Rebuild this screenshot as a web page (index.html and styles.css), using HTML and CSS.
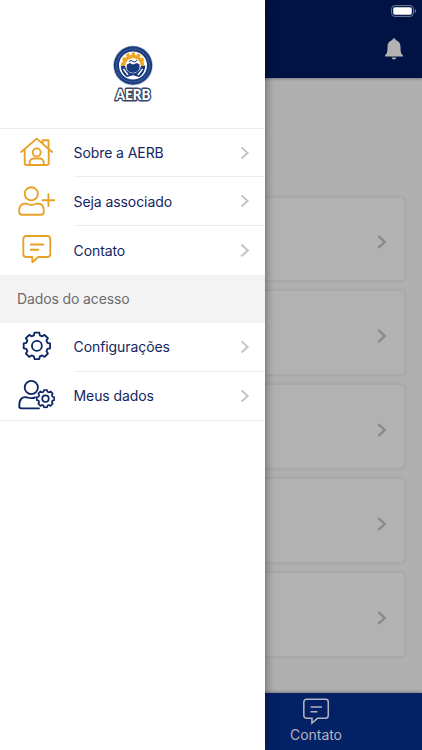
FILE: index.html
```html
<!DOCTYPE html>
<html lang="pt-BR">
<head>
<meta charset="utf-8">
<meta name="viewport" content="width=device-width, initial-scale=1">
<title>AERB</title>
<link rel="stylesheet" href="styles.css">
</head>
<body>
<svg class="defs" width="0" height="0" aria-hidden="true">
  <symbol id="chevron" viewBox="0 0 10 14"><path d="M1.300 1.100 7.800 7 1.300 12.900"/></symbol>
  <symbol id="chat" viewBox="0 0 32 32"><path d="M5 2.500H26a3 3 0 0 1 3 3V20.500a3 3 0 0 1-3 3H17L11 28.700V23.500H5a3 3 0 0 1-3-3V5.500a3 3 0 0 1 3-3ZM9.500 11H22M9.500 16.200H17"/></symbol>
  <symbol id="gear" viewBox="-15 -15 30 30"><path d="M-3-10.600-2.400-13.300H2.400L3-10.600 5.370-9.620 7.710-11.100 11.100-7.710 9.620-5.370 10.600-3 13.300-2.400V2.400L10.600 3 9.620 5.370 11.100 7.710 7.710 11.100 5.370 9.620 3 10.600 2.400 13.300H-2.400L-3 10.600-5.370 9.620-7.710 11.100-11.100 7.710-9.620 5.370-10.600 3-13.300 2.400V-2.400L-10.600-3-9.620-5.370-11.100-7.710-7.710-11.100-5.370-9.620Z"/><circle r="5"/></symbol>
</svg>
<div class="phone">
  <main class="app">
    <header class="topbar">
      <svg class="battery" viewBox="0 0 26 12"><rect x=".6" y=".6" width="21.800" height="10.800" rx="3.200" fill="none" stroke="#747f9f"/><rect x="2.200" y="2.200" width="18.600" height="7.600" rx="1.700" fill="#fff"/><path d="M23.800 4v4q1.400-.5 1.400-2T23.800 4Z" fill="#747f9f"/></svg>
      <svg class="bell" viewBox="0 0 20 22"><path d="M10 .3c1 0 1.500.7 1.500 1.700 3.300.8 5 3.300 5 6.800 0 5.200.5 7 2.500 8.700v.9H1v-.9c2-1.700 2.500-3.500 2.500-8.700 0-3.500 1.700-6 5-6.800C8.500 1 9 .3 10 .3ZM7.700 19.500h4.600c-.2 1.300-1.100 2-2.300 2s-2.100-.7-2.300-2Z" fill="#b2b2b2"/></svg>
    </header>
    <section class="cards">
      <article class="card"><svg><use href="#chevron"/></svg></article>
      <article class="card"><svg><use href="#chevron"/></svg></article>
      <article class="card"><svg><use href="#chevron"/></svg></article>
      <article class="card"><svg><use href="#chevron"/></svg></article>
      <article class="card"><svg><use href="#chevron"/></svg></article>
    </section>
    <footer class="tabbar">
      <div class="tab"><svg viewBox="0 0 32 32"><use href="#chat" width="32" height="32"/></svg><span>Contato</span></div>
    </footer>
  </main>
  <aside class="drawer">
    <div class="brand">
      <svg class="logo" viewBox="0 0 44 58">
        <circle cx="22" cy="20.500" r="20" fill="#c9d0e2"/>
        <circle cx="22" cy="20.500" r="19.200" fill="#193b80"/>
        <circle cx="22" cy="20.500" r="16.500" fill="none" stroke="#6579a6" stroke-width="1.200" stroke-dasharray="1 1.100"/>
        <circle cx="22" cy="20.500" r="14" fill="#fff"/>
        <path d="M9.700 20.500 14 21q1 6 8 7.500 7-1.500 8-7.500l4.300-.5q-.5 8-6 11.500H15.700q-5.500-3.500-6-11.500Z" fill="#193b80"/>
        <circle cx="22" cy="19.500" r="10.800" fill="none" stroke="#eda625" stroke-width="2.600" stroke-dasharray="3.390 2.265 3.390 2.265 3.390 2.265 3.390 2.265 3.390 2.265 3.390 100" transform="rotate(172 22 19.500)"/>
        <path d="M12.500 21a9.500 9.500 0 0 1 19 0" fill="none" stroke="#eda625" stroke-width="3.400"/>
        <circle cx="22" cy="20" r="6.600" fill="#fff"/>
        <path d="M16 19.500 19 18l3 1.500 4-1.500 2.500 1.500v4l-2 3-4.500 1.500-4.500-1.500-2-3Z" fill="#193b80"/>
        <path d="M18 16.500q2-2 4 0t4-1.500" fill="none" stroke="#193b80"/>
        <path d="m12.500 24 4.500 6M31.500 24 27 30" fill="none" stroke="#fff" stroke-width="1.300"/>
        <path d="m17 32.500 5-1.500 5 1.500" fill="none" stroke="#fff" stroke-width="1.500"/>
        <text x="22" y="54.500" text-anchor="middle" textLength="35" lengthAdjust="spacingAndGlyphs">AERB</text>
      </svg>
    </div>
    <nav class="menu gold">
      <a class="item"><svg class="icon" viewBox="0 0 38 32"><path d="M3.200 16 18.700 2.600 34.200 16M6.700 13.500V27a2 2 0 0 0 2 2H28.700a2 2 0 0 0 2-2V13.500M24.500 7.200V4.200H30.500V12.700M11.700 28.500V26.500a4 4 0 0 1 4-4H21.700a4 4 0 0 1 4 4V28.500"/><circle cx="18.700" cy="16.400" r="4"/></svg><span class="label">Sobre a AERB</span><svg class="arrow"><use href="#chevron"/></svg></a>
      <a class="item"><svg class="icon" viewBox="0 0 38 32"><circle cx="13.300" cy="8.800" r="6.600"/><path d="M1.200 27Q1 18.500 7 18.500C10 18.500 10.500 20 13.500 20S17 18.500 20 18.500Q26 18.500 25.800 27 25.800 29.700 23 29.700H4Q1.200 29.700 1.200 27ZM24.500 15.200H36.200M30.400 9.200V21"/></svg><span class="label">Seja associado</span><svg class="arrow"><use href="#chevron"/></svg></a>
      <a class="item"><svg class="icon" viewBox="0 0 38 32"><use href="#chat" x="3.300" y="-.5" width="32" height="32"/></svg><span class="label">Contato</span><svg class="arrow"><use href="#chevron"/></svg></a>
    </nav>
    <h2 class="section">Dados do acesso</h2>
    <nav class="menu navy">
      <a class="item"><svg class="icon" viewBox="0 0 38 32"><use href="#gear" x="4" y="0" width="29.800" height="29.800"/></svg><span class="label">Configurações</span><svg class="arrow"><use href="#chevron"/></svg></a>
      <a class="item"><svg class="icon" viewBox="0 0 38 32"><circle cx="13.300" cy="8.500" r="6.600"/><path d="M17 18.500C14 19.500 11.500 19.200 9.500 18.500 4 17 1.200 20.500 1.200 27Q1.200 29.300 3.500 29.300H21"/><use href="#gear" x="17.700" y="9.900" width="19.600" height="19.600" class="small-gear"/></svg><span class="label">Meus dados</span><svg class="arrow"><use href="#chevron"/></svg></a>
    </nav>
  </aside>
</div>
</body>
</html>
```
FILE: styles.css
```css
* { box-sizing: border-box; }
body { margin: 0; font-family: Inter, "Liberation Sans", sans-serif; }
.defs { display: block; position: absolute; }
.phone { position: relative; width: 422px; height: 750px; overflow: hidden; }
.app { display: flex; flex-direction: column; height: 100%; background: #b0b0b0; }
.topbar {
  height: 77.500px; flex: none; display: flex; flex-direction: column; align-items: flex-end;
  background: #001344; box-shadow: 0 1px 3px rgba(0, 0, 0, .3); padding: 5px 4px 0 0;
}
.battery { width: 26px; height: 12px; margin-right: 1px; }
.bell { width: 20px; height: 22px; margin: 21px 14px 0 0; }
.cards { flex: 1; padding: 119px 17px 0; display: flex; flex-direction: column; gap: 9.300px; }
.card {
  height: 84.600px; flex: none; border-radius: 4px; background: #b2b2b2;
  border: 1px solid #a9a9a9; box-shadow: 0 0 3px rgba(0, 0, 0, .1);
  display: flex; align-items: center; justify-content: flex-end; padding: 7px 17px 0 0;
}
.card svg { width: 10px; height: 14px; fill: none; stroke: #898989; stroke-width: 2.200; }
.tabbar {
  height: 57.500px; flex: none; padding-left: 264px; background: #052166;
  box-shadow: 0 -1px 3px rgba(0, 0, 0, .3);
}
.tab { width: 104px; display: flex; flex-direction: column; align-items: center; color: #b2b5bf; font-size: 14px; line-height: 18px; letter-spacing: -.05px; }
.tab svg { width: 29px; height: 29px; margin-top: 4px; fill: none; stroke: #b2b5bf; stroke-width: 1.700; }
.drawer {
  position: absolute; top: 0; left: 0; width: 265px; height: 750px;
  background: #fff; box-shadow: 0 0 10px rgba(0, 0, 0, .5);
}
.brand { height: 128.500px; border-bottom: 1px solid #ededed; padding: 45px 0 0 110.500px; }
.logo { display: block; width: 44px; height: 58px; overflow: visible; }
.logo text { font: 900 15.500px Lato, sans-serif; fill: #fff; stroke: #39466a; stroke-width: 3px; paint-order: stroke; stroke-linejoin: round; }
.item { height: 48.850px; display: flex; align-items: center; padding-left: 18px; }
.icon { width: 38px; height: 32px; flex: none; fill: none; stroke: currentColor; stroke-width: 1.850; stroke-linecap: round; stroke-linejoin: round; margin-top: -1.500px; }
.gold { color: #e7a126; }
.navy { color: #0c2564; }
.small-gear { stroke-width: 2.500; }
.label {
  flex: 1; height: 100%; margin-left: 17.500px; display: flex; align-items: center;
  border-bottom: 1px solid #ededed; color: #14265f; font-size: 14px; letter-spacing: -.08px;
}
.arrow {
  width: 25.500px; height: 100%; padding: 17.350px 15.500px 17.350px 0;
  border-bottom: 1px solid #ededed; fill: none; stroke: #c4c4c6; stroke-width: 2.100;
}
.item:last-child .label, .item:last-child .arrow { border: 0; }
.navy .item:last-child { border-bottom: 1px solid #ededed; }
.section { margin: 0; height: 48px; padding-left: 17px; background: #f3f3f3; color: #6c6c6c; font-size: 14px; font-weight: 400; line-height: 47px; letter-spacing: -.12px; }
```
